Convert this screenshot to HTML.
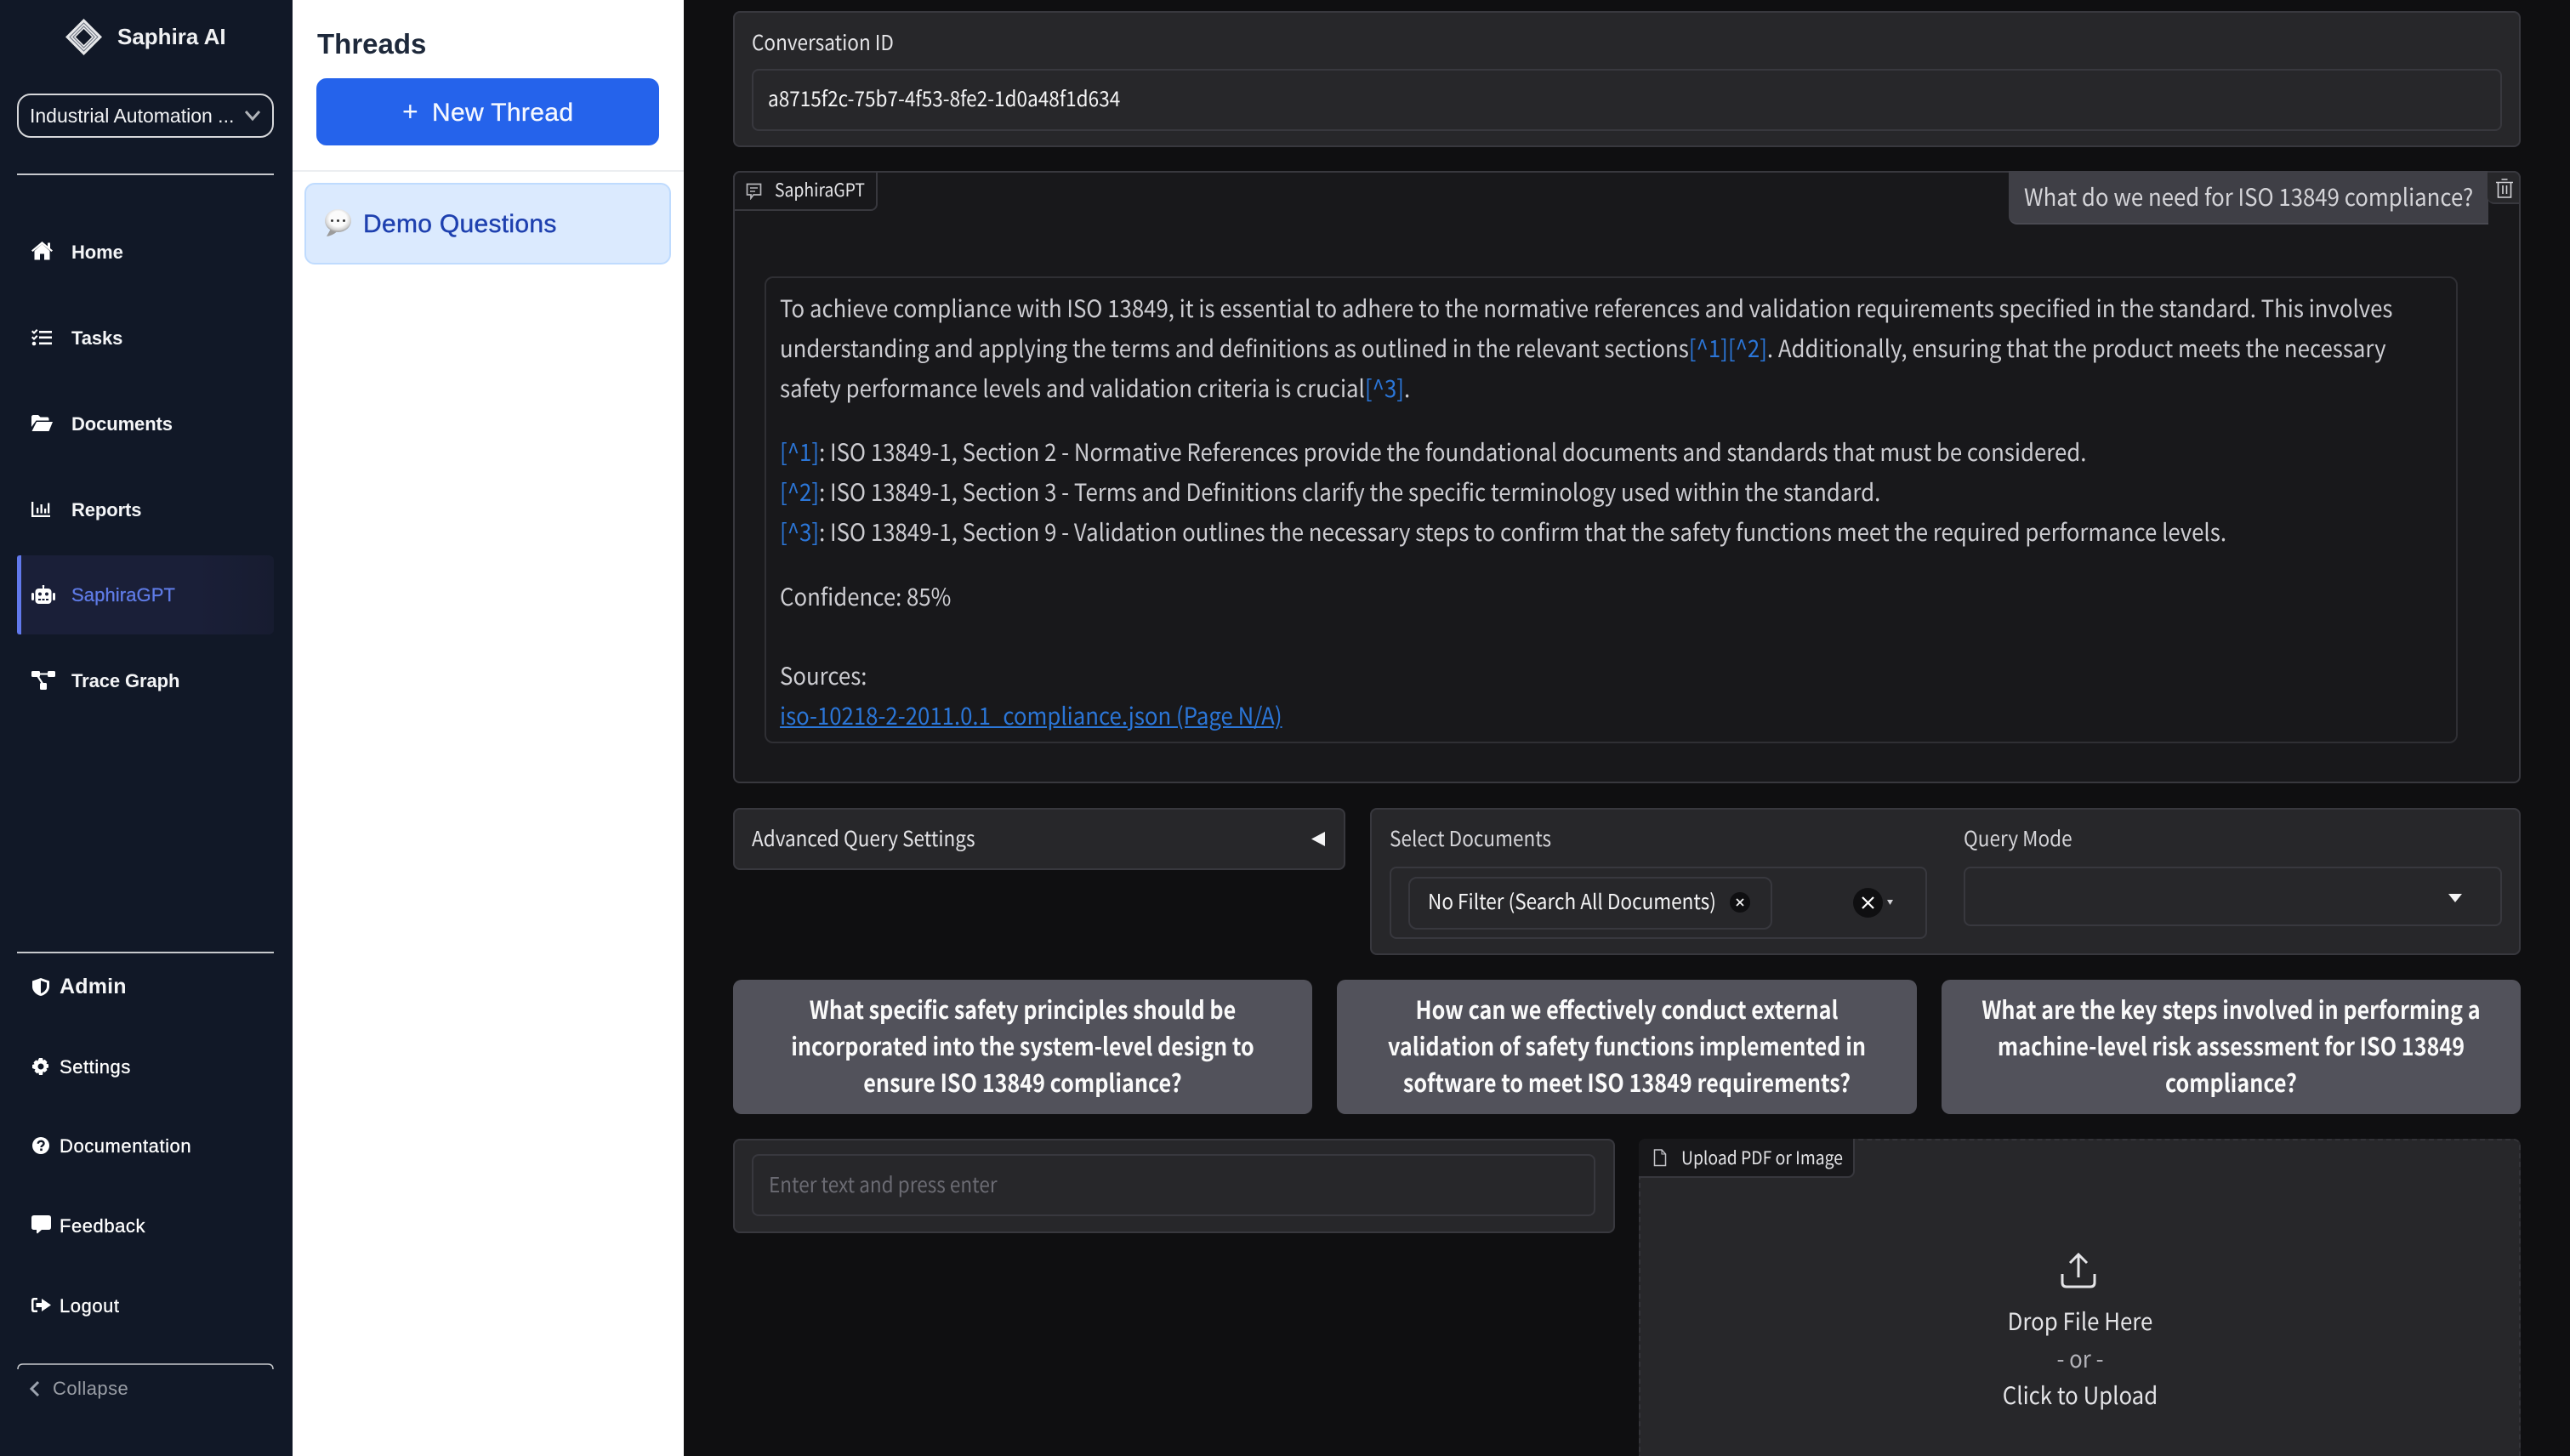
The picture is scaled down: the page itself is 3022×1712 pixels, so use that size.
<!DOCTYPE html>
<html><head><meta charset="utf-8"><style>
*{box-sizing:border-box;margin:0;padding:0}
html,body{width:3022px;height:1712px;overflow:hidden;background:#0f0f11}
#root{position:absolute;left:0;top:0;width:3022px;height:1712px;overflow:hidden;background:#0f0f11}
.a{position:absolute}
.t{position:absolute;white-space:nowrap;line-height:1}
.s{font-family:"Liberation Sans",sans-serif}
.n{font-family:"Noto Sans CJK JP","Liberation Sans",sans-serif;transform:scaleX(.921);transform-origin:0 50%}
.c{transform-origin:50% 50%}
.nav{font-size:22px;font-weight:700;color:#f4f5f7;left:84px;letter-spacing:-.1px}
.nav2{font-size:22px;font-weight:400;color:#fff;left:70px;letter-spacing:.55px;-webkit-text-stroke:.3px #fff}
svg{position:absolute;display:block}
.p{background:#27272a;border:2px solid #38383e;border-radius:8px}
.inp{border:2px solid #38383e;border-radius:8px}
.body{font-size:28px;color:#cdcdd2;left:917px}
.lk{color:#2b76d8}
.lab{font-size:24.5px;color:#e4e4e7}
.btn{background:#52525b;border-radius:10px;position:absolute;top:1152px;height:158px}
.bt{position:absolute;left:0;right:0;text-align:center;font-size:29px;font-weight:700;color:#fafafa;line-height:43px;top:13px;white-space:nowrap;transform:scaleX(.868);transform-origin:50% 50%}
</style></head><body><div id="root">
<div class="a" style="left:0;top:0;width:344px;height:1712px;background:#111827"></div>
<div class="a" style="left:344px;top:0;width:460px;height:1712px;background:#fff"></div>

<svg style="left:76px;top:21px" width="45" height="45" viewBox="0 0 45 45"><path d="M22.5 1 44 22.5 22.5 44 1 22.5Z" fill="#e6e7e9"/><g fill="none" stroke="#6b7280" stroke-width="1"><path d="M22.5 6 39 22.5 22.5 39 6 22.5Z"/><path d="M22.5 10 35 22.5 22.5 35 10 22.5Z"/></g><path d="M22.5 13 32 22.5 22.5 32 13 22.5Z" fill="#111827"/></svg>
<div class="t s" style="left:138px;top:30px;font-size:26px;font-weight:700;color:#f0f1f3">Saphira AI</div>
<div class="a" style="left:20px;top:110px;width:302px;height:52px;border:2px solid #d6d7da;border-radius:16px"></div>
<div class="t s" style="left:35px;top:125px;font-size:23px;color:#f3f4f6">Industrial Automation ...</div>
<svg style="left:287px;top:128px" width="20" height="16" viewBox="0 0 20 16"><path d="M2 3 10 12 18 3" fill="none" stroke="#b0b3b8" stroke-width="3"/></svg>
<div class="a" style="left:20px;top:204px;width:302px;height:2px;background:#c7c9cd"></div>

<svg style="left:37px;top:284px" width="25" height="22" viewBox="0 0 25 22" fill="#fff"><path d="M12.5 3 3.5 11v10.500h6.500V14.500h5v7h6.500V11Z"/><path d="M0 10.500 12.500 0 19 5.500V1.500h3v6.500L25 10.500 23.500 12 12.500 3 1.500 12Z"/></svg>
<div class="t s nav" style="top:286px">Home</div>
<svg style="left:37px;top:387px" width="24" height="20" viewBox="0 0 24 20" fill="#fff"><path d="M0 3 1.500 1.500 3 3 6 0 7.500 1.500 3 6ZM0 10 1.500 8.500 3 10 6 7 7.500 8.500 3 13Z"/><circle cx="3" cy="17" r="2.300"/><rect x="9" y="2" width="15" height="2.600"/><rect x="9" y="8.500" width="15" height="2.600"/><rect x="9" y="15.500" width="15" height="2.600"/></svg>
<div class="t s nav" style="top:387px">Tasks</div>
<svg style="left:37px;top:488px" width="25" height="19" viewBox="0 0 25 19" fill="#fff"><path d="M0 2.500Q0 0 2.500 0H8L10.500 2.500H18.500Q20.500 2.500 20.500 5V6.500H5.500L0 14Z"/><path d="M6 8H25L20.500 19H0.500Z"/></svg>
<div class="t s nav" style="top:488px">Documents</div>
<svg style="left:37px;top:590px" width="22" height="18" viewBox="0 0 22 18" fill="#fff"><path d="M0 0H2.300V15.700H22V18H0Z"/><rect x="6" y="7" width="2.300" height="6.500"/><rect x="10.500" y="3" width="2.300" height="10.500"/><rect x="15" y="8" width="2.300" height="5.500"/><rect x="19" y="1.500" width="2.300" height="12"/></svg>
<div class="t s nav" style="top:589px">Reports</div>

<div class="a" style="left:20px;top:653px;width:302px;height:93px;background:linear-gradient(90deg,#1a1f38 0,#1a1f38 70%,#171c30 100%);border-radius:0 6px 6px 0"></div>
<div class="a" style="left:20px;top:653px;width:5px;height:93px;background:#6179ec;border-radius:3px 0 0 3px"></div>
<svg style="left:37px;top:688px" width="28" height="22" viewBox="0 0 28 22" fill="#fff"><rect x="4.500" y="4" width="19" height="18" rx="4"/><rect x="0" y="9" width="3" height="9" rx="1.500"/><rect x="25" y="9" width="3" height="9" rx="1.500"/><rect x="13" y="0" width="2" height="4"/><circle cx="14" cy="1" r="1.300"/><circle cx="10" cy="10.500" r="2" fill="#1a1f38"/><circle cx="18" cy="10.500" r="2" fill="#1a1f38"/><g fill="#1a1f38"><rect x="8" y="16" width="3" height="2"/><rect x="12.500" y="16" width="3" height="2"/><rect x="17" y="16" width="3" height="2"/></g></svg>
<div class="t s" style="left:84px;top:689px;font-size:22px;color:#5f7be6;-webkit-text-stroke:.3px #5f7be6;letter-spacing:.1px">SaphiraGPT</div>

<svg style="left:37px;top:789px" width="28" height="22" viewBox="0 0 28 22" fill="#fff"><rect x="0" y="0" width="10" height="7" rx="1.500"/><rect x="19" y="0" width="9" height="7" rx="1.500"/><rect x="10" y="14" width="8" height="8" rx="1.500"/><path d="M9 2.500H20V4.500H9Z"/><path d="M6 6 8 5 14.500 15 12.500 16Z"/></svg>
<div class="t s nav" style="top:790px">Trace Graph</div>

<div class="a" style="left:20px;top:1119px;width:302px;height:2px;background:#c7c9cd"></div>
<svg style="left:38px;top:1150px" width="20" height="21" viewBox="0 0 20 21"><path d="M10 0 20 3.500V10C20 15.500 15 20 10 21 5 20 0 15.500 0 10V3.500Z" fill="#fff"/><path d="M10 3V18C13.500 17 17 13.500 17 10V5.500Z" fill="#111827"/></svg>
<div class="t s" style="left:70px;top:1148px;font-size:25px;font-weight:700;color:#f4f5f7;letter-spacing:.2px">Admin</div>
<svg style="left:38px;top:1244px" width="20" height="20" viewBox="0 0 20 20"><path d="M8 0h4l.7 2.800 2-.9 2.800 2.800-1 2 2.500.7v4l-2.500.7 1 2-2.800 2.800-2-1L12 20H8l-.7-2.800-2 1-2.800-2.800 1-2L0 12V8l2.500-.7-1-2L4.300 2.500l2 1Z" fill="#fff"/><circle cx="10" cy="10" r="3.500" fill="#111827"/></svg>
<div class="t s nav2" style="top:1244px">Settings</div>
<svg style="left:38px;top:1337px" width="20" height="20" viewBox="0 0 20 20"><circle cx="10" cy="10" r="10" fill="#fff"/><path d="M6.800 7.800C6.800 3.800 13.500 3.800 13.500 7.500 13.500 10 10.500 9.800 10.500 12" fill="none" stroke="#111827" stroke-width="2.400"/><rect x="9.200" y="13.500" width="2.600" height="2.600" fill="#111827"/></svg>
<div class="t s nav2" style="top:1337px">Documentation</div>
<svg style="left:37px;top:1429px" width="23" height="22" viewBox="0 0 23 22"><path d="M3 0H20Q23 0 23 3V14Q23 17 20 17H12L7 21.500Q6 21 6 20V17H3Q0 17 0 14V3Q0 0 3 0Z" fill="#fff"/></svg>
<div class="t s nav2" style="top:1431px">Feedback</div>
<svg style="left:37px;top:1526px" width="23" height="17" viewBox="0 0 23 17" fill="#fff"><path d="M7 0V2.500H3.500Q2.500 2.500 2.500 3.500V13.500Q2.500 14.500 3.500 14.500H7V17H3Q0 17 0 14V3Q0 0 3 0Z"/><path d="M5.500 6H12V1L23 8.500 12 16V11H5.500Z"/></svg>
<div class="t s nav2" style="top:1525px">Logout</div>
<svg style="left:20px;top:1602px" width="302" height="10" viewBox="0 0 302 10"><path d="M1 8Q1 2 7 2H295Q301 2 301 8" fill="none" stroke="#c7c9cd" stroke-width="1.500"/></svg>
<svg style="left:34px;top:1623px" width="13" height="20" viewBox="0 0 13 20"><path d="M11 2 3 10 11 18" fill="none" stroke="#9ca3af" stroke-width="3"/></svg>
<div class="t s" style="left:62px;top:1622px;font-size:22px;color:#9a9ea6;letter-spacing:.45px">Collapse</div>

<div class="t s" style="left:373px;top:35px;font-size:33px;font-weight:700;color:#1e293b">Threads</div>
<div class="a" style="left:372px;top:92px;width:403px;height:79px;background:#2563eb;border-radius:12px"></div>
<div class="t s" style="left:473px;top:115px;font-size:32px;color:#f5f8ff">+</div>
<div class="t s" style="left:508px;top:118px;font-size:30px;letter-spacing:.35px;color:#f5f8ff;-webkit-text-stroke:.3px #f5f8ff">New Thread</div>
<div class="a" style="left:344px;top:200px;width:460px;height:2px;background:#eceef1"></div>
<div class="a" style="left:358px;top:215px;width:431px;height:96px;background:#dbeafe;border:2px solid #bfdbfe;border-radius:12px"></div>
<svg style="left:380px;top:244px" width="36" height="36" viewBox="0 0 36 36"><defs><radialGradient id="g" cx=".5" cy=".42" r=".55"><stop offset=".6" stop-color="#fbfbfb"/><stop offset=".88" stop-color="#d4d4d4"/><stop offset="1" stop-color="#a8a8a8"/></radialGradient></defs><path d="M9 25 4 34Q11 33 16 28.500L10 23Z" fill="#9b9b9b"/><ellipse cx="17.500" cy="15.500" rx="15.500" ry="13.500" fill="url(#g)"/><g fill="#333"><circle cx="10.500" cy="15.500" r="1.500"/><circle cx="17.500" cy="15.500" r="1.500"/><circle cx="24.500" cy="15.500" r="1.500"/></g></svg>
<div class="t s" style="left:427px;top:249px;font-size:30px;letter-spacing:.3px;color:#1e40af;-webkit-text-stroke:.4px #1e40af">Demo Questions</div>

<div class="a p" style="left:862px;top:13px;width:2102px;height:160px"></div>
<div class="t n lab" style="left:884px;top:38px">Conversation ID</div>
<div class="a inp" style="left:884px;top:81px;width:2058px;height:73px"></div>
<div class="t n" style="left:903px;top:104px;font-size:24.5px;color:#f4f4f5">a8715f2c-75b7-4f53-8fe2-1d0a48f1d634</div>

<div class="a" style="left:862px;top:201px;width:2102px;height:720px;background:#18181b;border:2px solid #38383e;border-radius:8px"></div>
<div class="a" style="left:862px;top:201px;width:170px;height:47px;background:#18181b;border:2px solid #38383e;border-radius:8px 0 8px 0"></div>
<svg style="left:877px;top:215px" width="19" height="20" viewBox="0 0 19 20"><path d="M1.500 1.500H17.500V14H9L6 18V14H1.500Z" fill="none" stroke="#b5b5ba" stroke-width="1.700"/><path d="M5 6H14M5 10H11" stroke="#b5b5ba" stroke-width="1.500"/></svg>
<div class="t n" style="left:911px;top:213px;font-size:21px;color:#e4e4e7">SaphiraGPT</div>
<div class="a" style="left:2362px;top:201px;width:564px;height:63px;background:#3f3f46;border-bottom:2px solid #4a4a52;border-radius:0 0 0 10px"></div>
<div class="t n" style="left:2380px;top:217px;font-size:28px;color:#d4d4d8">What do we need for ISO 13849 compliance?</div>
<div class="a" style="left:2925px;top:201px;width:39px;height:39px;background:#27272a;border:2px solid #38383e;border-width:2px 2px 2px 0;border-radius:0 8px 0 8px"></div>
<svg style="left:2934px;top:209px" width="22" height="24" viewBox="0 0 22 24" fill="none" stroke="#d4d4d8" stroke-width="1.600"><path d="M1 5.500H21M7.500 2H14.500"/><path d="M3.500 5.500V23H18.500V5.500M9 9V19M13.500 9V19"/></svg>

<div class="a" style="left:899px;top:325px;width:1991px;height:549px;border:2px solid #2f2f34;border-radius:10px"></div>
<div class="t n body" style="top:348px">To achieve compliance with ISO 13849, it is essential to adhere to the normative references and validation requirements specified in the standard. This involves</div>
<div class="t n body" style="top:395px">understanding and applying the terms and definitions as outlined in the relevant sections<span class="lk">[^1][^2]</span>. Additionally, ensuring that the product meets the necessary</div>
<div class="t n body" style="top:442px">safety performance levels and validation criteria is crucial<span class="lk">[^3]</span>.</div>
<div class="t n body" style="top:517px"><span class="lk">[^1]</span>: ISO 13849-1, Section 2 - Normative References provide the foundational documents and standards that must be considered.</div>
<div class="t n body" style="top:564px"><span class="lk">[^2]</span>: ISO 13849-1, Section 3 - Terms and Definitions clarify the specific terminology used within the standard.</div>
<div class="t n body" style="top:611px"><span class="lk">[^3]</span>: ISO 13849-1, Section 9 - Validation outlines the necessary steps to confirm that the safety functions meet the required performance levels.</div>
<div class="t n body" style="top:687px">Confidence: 85%</div>
<div class="t n body" style="top:780px">Sources:</div>
<div class="t n body lk" style="top:827px;text-decoration:underline">iso-10218-2-2011.0.1_compliance.json (Page N/A)</div>

<div class="a p" style="left:862px;top:950px;width:720px;height:73px"></div>
<div class="t n lab" style="left:884px;top:974px">Advanced Query Settings</div>
<svg style="left:1541px;top:978px" width="18" height="17" viewBox="0 0 18 17"><path d="M17 0V17L1 8.500Z" fill="#f4f4f5"/></svg>
<div class="a p" style="left:1611px;top:950px;width:1353px;height:173px"></div>
<div class="t n lab" style="left:1634px;top:974px;color:#d4d4d8">Select Documents</div>
<div class="a inp" style="left:1634px;top:1019px;width:632px;height:85px"></div>
<div class="a inp" style="left:1656px;top:1031px;width:428px;height:62px;border-radius:10px"></div>
<div class="t n" style="left:1679px;top:1048px;font-size:24.5px;color:#f4f4f5">No Filter (Search All Documents)</div>
<svg style="left:2034px;top:1049px" width="24" height="24" viewBox="0 0 24 24"><circle cx="12" cy="12" r="12" fill="#0f0f11"/><path d="M8 8 16 16M16 8 8 16" stroke="#f4f4f5" stroke-width="1.800"/></svg>
<svg style="left:2179px;top:1044px" width="35" height="35" viewBox="0 0 35 35"><circle cx="17.500" cy="17.500" r="17.500" fill="#0f0f11"/><path d="M11 11 24 24M24 11 11 24" stroke="#fff" stroke-width="2.200"/></svg>
<svg style="left:2219px;top:1058px" width="7" height="6" viewBox="0 0 7 6"><path d="M0 0H7L3.500 6Z" fill="#d4d4d8"/></svg>
<div class="t n lab" style="left:2309px;top:974px;color:#d4d4d8">Query Mode</div>
<div class="a inp" style="left:2309px;top:1019px;width:633px;height:70px"></div>
<svg style="left:2879px;top:1051px" width="16" height="10" viewBox="0 0 16 10"><path d="M0 0H16L8 10Z" fill="#f4f4f5"/></svg>

<div class="btn" style="left:862px;width:681px"><div class="bt n">What specific safety principles should be<br>incorporated into the system-level design to<br>ensure ISO 13849 compliance?</div></div>
<div class="btn" style="left:1572px;width:682px"><div class="bt n">How can we effectively conduct external<br>validation of safety functions implemented in<br>software to meet ISO 13849 requirements?</div></div>
<div class="btn" style="left:2283px;width:681px"><div class="bt n">What are the key steps involved in performing a<br>machine-level risk assessment for ISO 13849<br>compliance?</div></div>

<div class="a p" style="left:862px;top:1339px;width:1037px;height:111px"></div>
<div class="a inp" style="left:884px;top:1357px;width:992px;height:73px"></div>
<div class="t n" style="left:904px;top:1381px;font-size:24.5px;color:#6b6b73">Enter text and press enter</div>

<div class="a" style="left:1927px;top:1339px;width:1037px;height:420px;background:#27272a;border:2px dashed #333338;border-radius:8px"></div>
<div class="a" style="left:1927px;top:1339px;width:254px;height:46px;background:#18181b;border:2px solid #38383e;border-top:0;border-left:0;border-radius:8px 0 8px 0"></div>
<svg style="left:1944px;top:1351px" width="16" height="21" viewBox="0 0 16 21"><path d="M1.500 1H10L14.500 6V19.500H1.500Z" fill="none" stroke="#c4c4c9" stroke-width="1.500"/><path d="M10 1V6H14.500" fill="none" stroke="#c4c4c9" stroke-width="1"/></svg>
<div class="t n" style="left:1977px;top:1351px;font-size:21px;color:#e4e4e7">Upload PDF or Image</div>
<svg style="left:2422px;top:1472px" width="44" height="44" viewBox="0 0 44 44" fill="none" stroke="#e4e4e7" stroke-width="3"><path d="M22 30V4M12 13 22 3 32 13"/><path d="M3 26V36Q3 41 8 41H36Q41 41 41 36V26"/></svg>
<div class="t n c" style="left:2146px;width:600px;text-align:center;top:1539px;font-size:28px;color:#e4e4e7">Drop File Here</div>
<div class="t n c" style="left:2146px;width:600px;text-align:center;top:1583px;font-size:28px;color:#b4b4ba">- or -</div>
<div class="t n c" style="left:2146px;width:600px;text-align:center;top:1626px;font-size:28px;color:#e4e4e7">Click to Upload</div>
</div></body></html>
